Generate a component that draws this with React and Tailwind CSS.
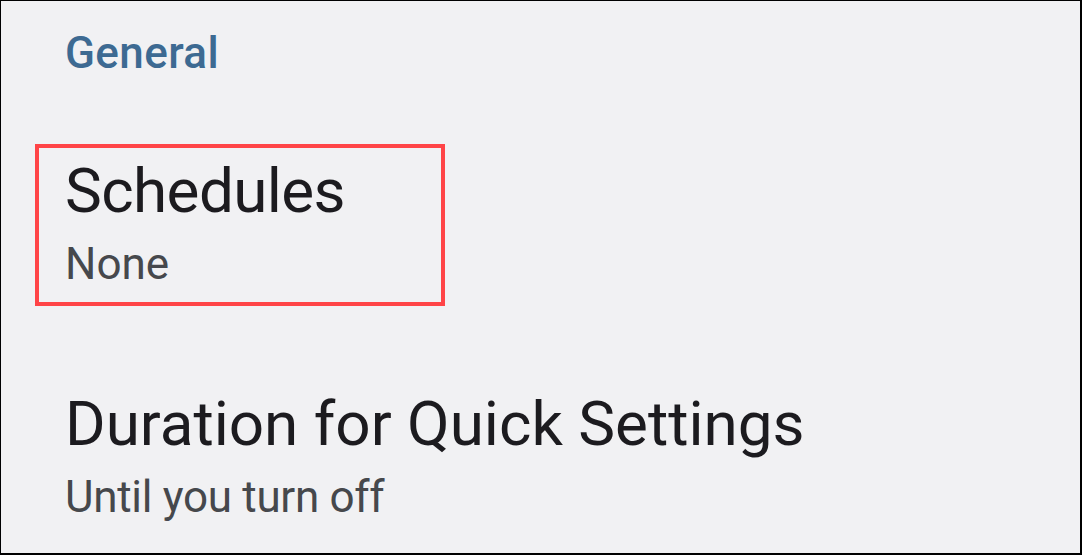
import React from 'react';

const font = { fontFamily: 'Roboto, "Noto Sans", sans-serif' };

export default function App() {
  return (
    <div
      className="w-[1082px] h-[555px] bg-[#f1f1f3] border-black border-t border-l border-r-2 border-b-2 overflow-hidden"
      style={font}
    >
      <div className="pt-[30px] pl-[64px] text-[44px] leading-[44px] font-medium tracking-[0.4px] text-[#3d6a92]">
        General
      </div>

      <div className="ml-[34px] mt-[69px] w-[410px] border-4 border-[#ff4447] pl-[26px] pt-[12px] pb-[16px]">
        <div className="text-[62px] leading-[62px] tracking-[-0.6px] text-[#1c1b1f]">Schedules</div>
        <div className="mt-[20px] text-[44px] leading-[44px] text-[#46484c]">None</div>
      </div>

      <div className="pl-[64px] mt-[87px]">
        <div className="text-[62px] leading-[62px] text-[#1c1b1f]">Duration for Quick Settings</div>
        <div className="mt-[20px] text-[44px] leading-[44px] tracking-[-0.3px] text-[#46484c]">Until you turn off</div>
      </div>
    </div>
  );
}
